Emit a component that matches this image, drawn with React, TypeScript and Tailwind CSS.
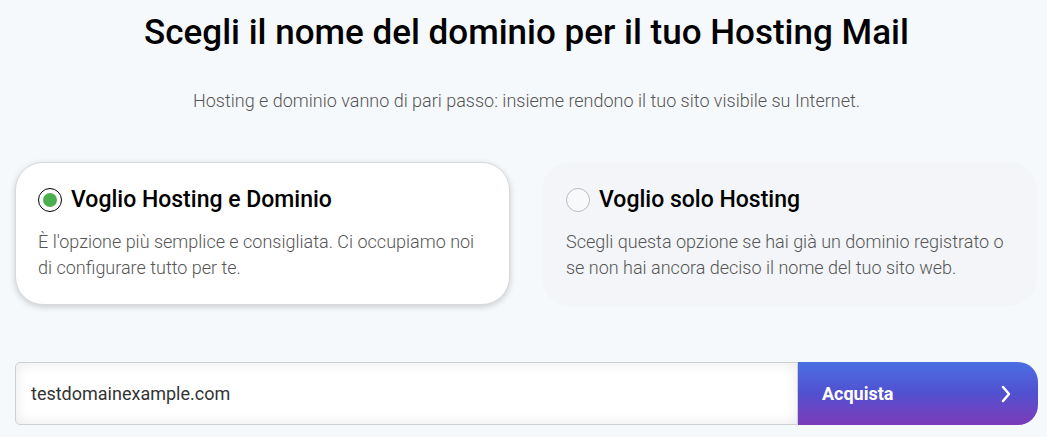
import React from "react";

export default function App() {
  return (
    <div
      className="w-[1047px] h-[437px] overflow-hidden bg-[#f6f9fc] text-black"
      style={{ fontFamily: "Roboto, 'Noto Sans', sans-serif" }}
    >
      <div className="ml-[15px] w-[1023px]">
        <h1 className="pt-[11px] text-center text-[35px] leading-[44px] font-medium text-black">
          Scegli il nome del dominio per il tuo Hosting Mail
        </h1>
        <p className="mt-[33px] text-center text-[18px] leading-[26px] font-light text-[#555]">
          Hosting e dominio vanno di pari passo: insieme rendono il tuo sito visibile su Internet.
        </p>
        <div className="mt-[48px] flex gap-[32px]">
          <div className="w-[495px] h-[143px] rounded-[28px] bg-white border border-[#d8d8d8] shadow-[0_2px_6px_rgba(0,0,0,0.18)] pl-[22px] pr-[20px] pt-[22px]">
            <div className="flex items-center gap-[9px]">
              <span className="w-[24px] h-[24px] rounded-full border-[1.5px] border-black flex items-center justify-center">
                <span className="w-[14px] h-[14px] rounded-full bg-[#4caf50]" />
              </span>
              <span className="text-[23px] leading-[30px] font-medium">Voglio Hosting e Dominio</span>
            </div>
            <p className="mt-[14px] text-[18px] leading-[26px] font-light text-[#555]">
              È l'opzione più semplice e consigliata. Ci occupiamo noi di configurare tutto per te.
            </p>
          </div>
          <div className="w-[495px] h-[144px] rounded-[28px] bg-[#f3f5f8] pl-[24px] pr-[20px] pt-[23px]">
            <div className="flex items-center gap-[9px]">
              <span className="w-[24px] h-[24px] rounded-full border border-[#bbb] bg-white/40" />
              <span className="text-[23px] leading-[30px] font-medium">Voglio solo Hosting</span>
            </div>
            <p className="mt-[14px] text-[18px] leading-[26px] font-light text-[#555]">
              Scegli questa opzione se hai già un dominio registrato o se non hai ancora deciso il nome del tuo sito web.
            </p>
          </div>
        </div>
        <div className="mt-[56px] flex h-[63px]">
          <div className="flex-1 flex items-center rounded-l-[5px] border border-[#cfcfcf] bg-white shadow-[inset_0_0_14px_rgba(0,0,0,0.09)] pl-[15px]">
            <span className="text-[18px] text-[#333] font-normal">testdomainexample.com</span>
          </div>
          <button className="w-[240px] flex items-center justify-between rounded-r-[20px] bg-gradient-to-b from-[#4a6fe2] via-[#5150d0] to-[#7a3ab8] pl-[24px] pr-[27px] text-white">
            <span className="text-[18px] font-bold">Acquista</span>
            <svg width="10" height="18" viewBox="0 0 10 18" fill="none">
              <path d="M2 2l6 7-6 7" stroke="white" strokeWidth="2.5" strokeLinecap="round" strokeLinejoin="round" />
            </svg>
          </button>
        </div>
      </div>
    </div>
  );
}
